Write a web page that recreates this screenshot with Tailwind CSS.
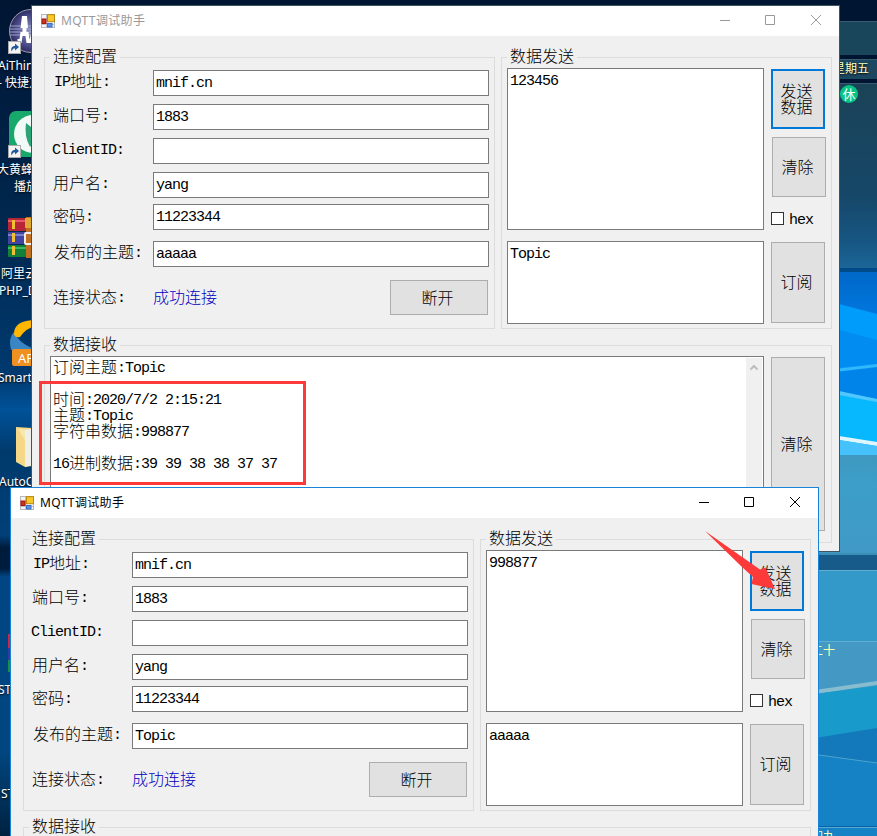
<!DOCTYPE html>
<html lang="zh-CN">
<head>
<meta charset="utf-8">
<title>MQTT调试助手</title>
<script src="https://cdn.jsdelivr.net/npm/@tailwindcss/browser@4"></script>
</head>
<body class="relative w-[877px] h-[836px] overflow-hidden bg-[#002048]">

<!-- Desktop wallpaper -->
<svg class="absolute inset-0" width="877" height="836" viewBox="0 0 877 836">
  <defs>
    <linearGradient id="left" x1="0" y1="0" x2="0" y2="1">
      <stop offset="0" stop-color="#001532"/><stop offset=".12" stop-color="#001d40"/><stop offset=".27" stop-color="#00284f"/>
      <stop offset=".45" stop-color="#003a70"/><stop offset=".49" stop-color="#005299"/><stop offset=".54" stop-color="#003a6c"/>
      <stop offset=".64" stop-color="#004078"/><stop offset=".655" stop-color="#001c3c"/><stop offset=".68" stop-color="#001c3c"/><stop offset=".69" stop-color="#004684"/>
      <stop offset=".9" stop-color="#004680"/><stop offset="1" stop-color="#00213f"/>
    </linearGradient>
    <linearGradient id="panel" x1="0" y1="0" x2="0" y2="1">
      <stop offset="0" stop-color="#1b4357"/><stop offset=".6" stop-color="#164768"/><stop offset=".85" stop-color="#175683"/><stop offset="1" stop-color="#1b6698"/>
    </linearGradient>
    <linearGradient id="sky" x1="0" y1="0" x2="0" y2="1">
      <stop offset="0" stop-color="#0068c8"/><stop offset=".25" stop-color="#0078e0"/><stop offset=".6" stop-color="#0090f4"/><stop offset="1" stop-color="#08b0fb"/>
    </linearGradient>
    <linearGradient id="low" x1="0" y1="0" x2="0" y2="1">
      <stop offset="0" stop-color="#3f98c0"/><stop offset=".3" stop-color="#3c9fc9"/><stop offset="1" stop-color="#4098c6"/>
    </linearGradient>
  </defs>
  <rect width="60" height="836" fill="url(#left)"/>
  <rect x="60" width="817" height="22" fill="#001532"/>
  <rect x="830" y="21" width="47" height="34" fill="#1a465c"/>
  <rect x="830" y="55" width="47" height="30" fill="#001532"/>
  <path d="M830 21.5h47M830 59.5h47M830 83.500h47" stroke="#3a5c70"/>
  <rect x="830" y="60" width="47" height="19" fill="#1b4860"/>
  <rect x="830" y="84" width="47" height="185" fill="url(#panel)"/>
  <rect x="830" y="268" width="47" height="4" fill="#004a8a"/>
  <rect x="830" y="272" width="47" height="184" fill="url(#sky)"/>
  <path d="M839 304L877 314V363L839 369Z" fill="#009cfb"/>
  <path d="M839 330L877 340V363L839 368Z" fill="#008cf0"/>
  <path d="M839 368.500L877 364V367L839 371.500Z" fill="#30b8fc"/>
  <path d="M839 372L877 368V400L839 392Z" fill="#0084ea"/>
  <path d="M839 392L877 399V455H839Z" fill="#08b8ff"/>
  <path d="M839 391L877 399V402L839 395Z" fill="#50c8ff"/>
  <path d="M839 436L877 442V446L839 440Z" fill="#e0f6ff"/>
  <path d="M839 440L877 446V455H839Z" fill="#45c2fc"/>
  <rect x="815" y="455" width="62" height="99" fill="url(#low)"/>
  <rect x="815" y="553" width="62" height="2" fill="#3b8fb5"/>
  <rect x="815" y="555" width="62" height="15" fill="#175b8b"/>
  <rect x="815" y="570" width="62" height="266" fill="#3399c8"/>
  <path d="M815 570.500h62M815 641.500h62" stroke="#62aed0"/>
  <path d="M815 642H877V683L815 692Z" fill="#4499c4"/>
  <path d="M815 690L877 681V685L815 694Z" fill="#88bdd0"/>
  <path d="M815 694L877 686V728L815 739Z" fill="#189bcb"/>
  <path d="M815 738L877 728V763L815 754Z" fill="#1479ba"/>
  <path d="M815 754L877 763V836H815Z" fill="#1482c4"/>
  <path d="M815 754.500L877 763" stroke="#4aa2cc"/>
  <path d="M815 826.500h62" stroke="#0762a8"/>
  <path d="M815 827.500h62" stroke="#58a8d0"/>
</svg>

<!-- Desktop icons and calendar -->
<svg class="absolute left-0 top-0" width="40" height="836" viewBox="0 0 40 836">
  <defs>
    <radialGradient id="orb"><stop offset="0" stop-color="#8a8fc0"/><stop offset=".7" stop-color="#4a4a88"/><stop offset="1" stop-color="#2c2c60"/></radialGradient>
    <g id="link"><rect width="12" height="12" fill="#f4f4f4" stroke="#aaa"/><path d="M3 10C2 6 4 4.500 6.500 4.500V2L10.500 5.500L6.500 9V6.700C4.500 6.700 4 8 3 10Z" fill="#205a9c"/></g>
  </defs>
  <circle cx="31" cy="31" r="21.500" fill="url(#orb)" stroke="#a09ab0"/>
  <path d="M10 26h22M10 29h22M10 32h22M10 35h22" stroke="#b8bcd8" stroke-width=".8"/>
  <path d="M22 16h5l1 12h-1.500v4h2l1 7h2v4h-5l-1-7h-3l-1 7h-4v-4h2l1-7h2v-4h-2z" fill="#fff"/><path d="M29 43l3-14v14z" fill="#fff"/>
  <use href="#link" x="8.500" y="41.500"/>
  <rect x="9" y="111" width="40" height="46" rx="7" fill="#18a86c"/>
  <circle cx="33" cy="134" r="19" fill="#f2faf7"/><path d="M26 123L40 134L30 147Q24 136 26 123Z" fill="#2ba476"/>
  <use href="#link" x="8.500" y="145.500"/>
  <rect x="8" y="218" width="30" height="13" rx="1" fill="#b82438"/><path d="M8 221h30" stroke="#e45a68" stroke-width="2"/>
  <rect x="8" y="232" width="30" height="12" fill="#4244a0"/><path d="M8 235h30" stroke="#7c80d0" stroke-width="2"/>
  <rect x="8" y="245" width="30" height="12" rx="1" fill="#128038"/><path d="M8 248h30" stroke="#3cba60" stroke-width="2"/>
  <path d="M12 220h3v9h-3zM12 233h3v9h-3zM12 246h3v9h-3z" fill="#f0c030"/>
  <rect x="26" y="217" width="12" height="41" fill="#c07020"/><rect x="25" y="218" width="12" height="10" fill="#e0a830"/><rect x="25" y="233" width="12" height="11" rx="1" fill="none" stroke="#eee" stroke-width="2"/>
  <path d="M11 350Q8 338 14 332Q20 345 38 350Z" fill="#3a86c4"/><path d="M14 334Q14 320 36 320V326Q26 328 20 337Q15 338 14 334Z" fill="#ffb600"/>
  <rect x="12" y="349" width="34" height="17" rx="2" fill="#f09020"/>
  <path d="M16 427L32 428V466L25 467L16 462Z" fill="#f4d888"/><path d="M18 429L32 430V464L25 465V440Z" fill="#f8e8b0"/><path d="M25 430L32 429V465L25 467Z" fill="#eeeeea"/>
  <rect x="8" y="634" width="4" height="14" fill="#c82850"/><rect x="8" y="648" width="4" height="12" fill="#3838a0"/><rect x="8" y="660" width="4" height="12" fill="#189040"/>
</svg>
<div class="absolute inset-0 text-[12px] leading-[18px] text-white whitespace-pre font-['Noto_Sans','Noto_Sans_CJK_SC',sans-serif] [text-shadow:0_1px_2px_black]">
  <span class="absolute left-[-2px] top-[57px]">AiThinker</span>
  <span class="absolute left-[-2px] top-[74px]">- 快捷方式</span>
  <span class="absolute left-[-3px] top-[161px]">大黄蜂云</span>
  <span class="absolute left-[14px] top-[178px]">播放器</span>
  <span class="absolute left-[1px] top-[265px]">阿里云</span>
  <span class="absolute left-[-1px] top-[282px]">PHP_D</span>
  <span class="absolute left-[18px] top-[349px] text-[13px] [text-shadow:none]">APP</span>
  <span class="absolute left-[-2px] top-[369px]">SmartL</span>
  <span class="absolute left-[-1px] top-[473px]">AutoCAD</span>
  <span class="absolute left-[-2px] top-[681px]">ST</span>
  <span class="absolute left-[1px] top-[785px]">ST</span>
  <span class="absolute left-[833px] top-[60px] text-[#ffffc0]">星期五</span>
  <span class="absolute left-[840px] top-[85px] w-[18px] h-[18px] rounded-full bg-[#08c484] text-center text-[13px] [text-shadow:none]">休</span>
  <span class="absolute left-[811px] top-[642px] text-[#ffffb0] [text-shadow:none]">二十</span>
  <span class="absolute left-[811px] top-[828px] text-[#ffffb0] [text-shadow:none]">初九</span>
</div>

<div id="first" class="absolute left-[31px] top-[5px]"></div>

<!-- Highlight round the received message -->
<div class="absolute left-[39px] top-[381px] w-[267px] h-[104px] border-3 border-[#fc3a3a]"></div>

<div id="second" class="absolute left-[10px] top-[487px] h-[349px] overflow-hidden"></div>

<!-- Pointer arrow -->
<svg class="absolute left-[700px] top-[525px]" width="80" height="72" viewBox="0 0 80 72">
  <path d="M5 6L60 44.500L65.500 42.500L75 64L51.500 59L53 52L42 42Z" fill="#fc3a3a"/>
</svg>

<script>
// Latin runs are set in a half-width monospace, CJK in full-width glyphs
const t = s => s.replace(/[\x20-\x7e]+/g, m =>
  `<span class="relative top-[-1px] font-['Liberation_Mono',monospace] text-[15px] leading-none tracking-[-1px]">${m}</span>`);

const legend = s => `<div class="absolute left-[5px] top-[-14px] h-[22px] leading-[22px] px-[3px] bg-[linear-gradient(#f0f0f0,#f0f0f0)]">${s}</div>`;

const field = (label, value, gap, pad) => `
  <div class="flex h-[26px] ${gap}">
    <label class="w-[108px] ${pad}">${t(label)}</label>
    <div class="w-[336px] border border-[#7a7a7a] bg-white pl-[2px] leading-[20px]">${t(value)}</div>
  </div>`;

const win = w => `
<div class="w-[809px] h-[547px] border ${w.frame} bg-[#f0f0f0] text-black text-[16px] font-['Noto_Sans_CJK_SC',sans-serif] font-light"><div class="flex flex-col">
  <header class="flex items-center h-[30px] bg-white pl-[9px] ${w.title}">
    <svg width="14" height="14" viewBox="0 0 14 14">
      <rect x=".5" y=".5" width="13" height="13" fill="#f4f4f8" stroke="#b8b8b8"/>
      <path d="M5.500 1v12M1 10.500h12" stroke="#c0c0c8"/>
      <rect x="6.500" y=".7" width="7" height="7" fill="#f8c828" stroke="#b88810"/>
      <rect x="1" y="5" width="4" height="4.500" fill="#d03020" stroke="#a01810"/>
      <rect x="6.500" y="9.500" width="4.500" height="3.500" fill="#5890e8" stroke="#3870c8"/>
    </svg>
    <span class="ml-[6px] text-[12px] leading-[18px] tracking-[0.35px] font-normal font-['Noto_Sans','Noto_Sans_CJK_SC',sans-serif]">MQTT调试助手</span>
    <svg class="ml-auto mr-[16px]" width="103" height="12" viewBox="0 0 103 12" fill="none" stroke="currentColor">
      <path d="M0 5.500h10M45.500 .5h9v9h-9zM91 0l10 10M101 0l-10 10"/>
    </svg>
  </header>
  <main class="flex flex-col gap-[16px] pl-[12px] pt-[21px]">
    <div class="flex gap-[6px]">
      <section class="relative w-[451px] h-[272px] border border-[#dcdcdc] pt-[12px]">
        ${legend('连接配置')}
        ${field('IP地址:', 'mnif.cn', 'mb-[8px]', 'pl-[9px] leading-[21px]')}
        ${field('端口号:', '1883', 'mb-[8px]', 'pl-[8px] leading-[21px]')}
        ${field('ClientID:', '', 'mb-[8px]', 'pl-[7px] leading-[21px]')}
        ${field('用户名:', 'yang', 'mb-[6px]', 'pl-[8px] leading-[21px]')}
        ${field('密码:', '11223344', 'mb-[11px]', 'pl-[8px] leading-[23px]')}
        ${field('发布的主题:', w.publish, 'mb-[13px]', 'pl-[9px] leading-[21px]')}
        <div class="flex h-[35px] leading-[32px]">
          <span class="w-[108px] pl-[8px]">${t('连接状态:')}</span>
          <span class="text-[#0000c0]">成功连接</span>
          <button class="ml-auto mr-[6px] w-[98px] border border-[#adadad] bg-[#e1e1e1] pr-[3px] pb-[2px]">断开</button>
        </div>
      </section>
      <section class="relative flex w-[331px] h-[272px] border border-[#dcdcdc] pt-[10px] pl-[5px]">
        ${legend('数据发送')}
        <div class="flex flex-col gap-[11px] w-[257px] leading-[20px]">
          <div class="h-[162px] bg-white border border-[#7a7a7a] pl-[2px]">${t(w.payload)}</div>
          <div class="h-[83px] bg-white border border-[#7a7a7a] pl-[2px]">${t(w.topic)}</div>
        </div>
        <div class="flex flex-col ml-[7px] pt-[1px]">
          <button class="w-[54px] h-[60px] border-2 border-[#0078d7] bg-[#e1e1e1] leading-[16px] pr-[3px] pb-[3px]">发送<br>数据</button>
          <button class="ml-[1px] mt-[8px] w-[54px] h-[60px] border border-[#adadad] bg-[#e1e1e1] pr-[3px] pb-[2px]">清除</button>
          <label class="flex items-center mt-[11px] h-[20px] gap-[5px]"><span class="w-[13px] h-[13px] border border-[#333] bg-white"></span><span class="pt-[2px] leading-[18px]">${t('hex')}</span></label>
          <button class="mt-[14px] w-[54px] h-[81px] border border-[#adadad] bg-[#e1e1e1] pr-[3px] pb-[3px]">订阅</button>
        </div>
      </section>
    </div>
    <section class="relative flex w-[788px] h-[198px] border border-[#dcdcdc] pt-[10px] pl-[5px]">
      ${legend('数据接收')}
      <div class="flex w-[714px] h-[176px] bg-white border border-[#7a7a7a] pl-[2px] pt-[1px] leading-[16px]">
        <div class="flex-1">${w.log.map(l => `<div class="h-[16px]">${t(l)}</div>`).join('')}</div>
        <div class="w-[16px] mr-[1px] bg-[#f0f0f0]">
          <svg width="16" height="18" viewBox="0 0 16 18" fill="none" stroke="#bdbdbd" stroke-width="2"><path d="M4.500 11.500L8 8L11.500 11.500"/></svg>
        </div>
      </div>
      <button class="ml-[7px] mt-[1px] w-[54px] h-[174px] border border-[#adadad] bg-[#e1e1e1] pr-[3px] pb-[3px]">清除</button>
    </section>
  </main>
</div></div>`;

document.getElementById('first').innerHTML = win({
  frame: 'border-[#40545f]', title: 'text-[#999999]',
  publish: 'aaaaa', payload: '123456', topic: 'Topic',
  log: ['订阅主题:Topic', '', '时间:2020/7/2 2:15:21', '主题:Topic', '字符串数据:998877', '', '16进制数据:39 39 38 38 37 37']
});
document.getElementById('second').innerHTML = win({
  frame: 'border-[#1883d7]', title: 'text-black',
  publish: 'Topic', payload: '998877', topic: 'aaaaa', log: []
});
</script>
</body>
</html>
